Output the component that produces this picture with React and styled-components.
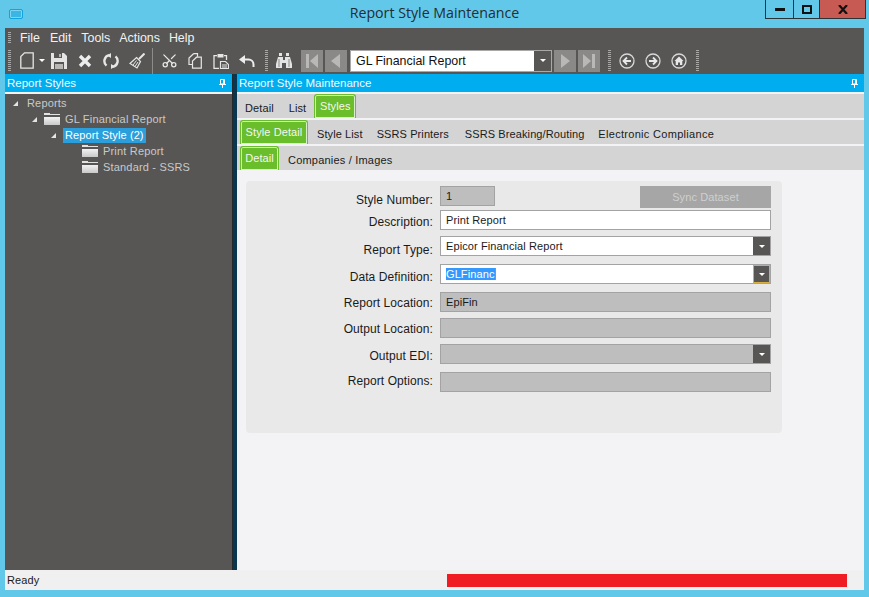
import React from 'react';
import styled, { createGlobalStyle } from 'styled-components';
import { Scissors } from 'lucide-react';

const GlobalStyle = createGlobalStyle`
html, body { margin: 0; padding: 0; height: 100%; overflow: hidden; }
body { background: #62c8ea; font-family: "Liberation Sans", Arial, sans-serif; font-size: 12px; }
`;

const Win = styled.div`
height: 597px;
width: 869px;
display: flex;
flex-direction: column;
background: #62c8ea;
`;

const TitleBar = styled.div`
height: 28px;
display: grid;
grid-template-columns: 1fr auto 1fr;
flex: none;
`;

const AppIcon = styled.div`
width: 12px;
height: 8px;
margin: 9px 0 0 9px;
border: 1px solid #12a4dc;
border-radius: 2px;
background: #3bb6e4;
box-shadow: inset 0 0 0 1px #7fd4f0;
`;

const Title = styled.div`
font-family: "Open Sans", sans-serif;
font-size: 14.2px;
line-height: 26px;
color: #1f2d33;
`;

const WinControls = styled.div`
justify-self: end;
display: flex;
height: 18px;
margin-right: 3px;
border: 1px solid #2a3338;
border-top: 0;
`;

const WinButton = styled.div`
width: ${props => props.$w}px;
display: flex;
align-items: center;
justify-content: center;
background: ${props => props.$close ? '#c75a52' : 'transparent'};
border-left: ${props => props.$first ? '0' : '1px solid #2a3338'};
`;

const Frame = styled.div`
flex: 1;
margin: 0 5px 7px;
display: flex;
flex-direction: column;
min-height: 0;
`;

const MenuBar = styled.div`
height: 19px;
background: #575654;
display: flex;
align-items: center;
padding-left: 3px;
flex: none;
`;

const Grip = styled.div`
width: 3px;
height: ${props => props.$h || 22}px;
margin-left: ${props => props.$ml || 0}px;
flex: none;
background: repeating-linear-gradient(to bottom, #a9a8a6 0 1px, transparent 1px 2px);
`;

const MenuItem = styled.span`
color: #f2f2f2;
font-size: 12.4px;
margin-left: ${props => props.$ml}px;
`;

const ToolBar = styled.div`
height: 27px;
background: #575654;
display: flex;
align-items: center;
padding-left: 3px;
flex: none;
`;

const ToolIcon = styled.div`
width: ${props => props.$w || 26}px;
margin-left: ${props => props.$ml || 0}px;
height: 24px;
flex: none;
display: flex;
align-items: center;
justify-content: center;
color: #e6e6e6;
`;

const ToolSep = styled.div`
width: 1px;
height: 26px;
margin-left: 2px;
background: #8d8c8a;
flex: none;
`;

const NavButton = styled.div`
width: 22px;
height: 22px;
margin-left: ${props => props.$ml || 0}px;
background: #8a8988;
flex: none;
display: flex;
align-items: center;
justify-content: center;
`;

const Combo = styled.div`
width: 202px;
height: 22px;
margin-left: 3px;
box-sizing: border-box;
border: 1px solid #a8a8a8;
background: #fff;
display: flex;
align-items: center;
justify-content: space-between;
font-size: 12.4px;
color: #111;
padding-left: 5px;
flex: none;
`;

const ComboArrow = styled.div`
width: ${props => props.$w || 17}px;
align-self: stretch;
background: #575654;
display: flex;
align-items: center;
justify-content: center;
box-sizing: border-box;
border: ${props => props.$focus ? '1px solid #d8ae3c' : '0'};
`;

const Caret = styled.div`
width: 0;
height: 0;
border-left: 3px solid transparent;
border-right: 3px solid transparent;
border-top: 3px solid #fff;
`;

const Panes = styled.div`
flex: 1;
display: flex;
min-height: 0;
`;

const LeftPane = styled.div`
width: 227px;
flex: none;
display: flex;
flex-direction: column;
`;

const Splitter = styled.div`
width: 5px;
flex: none;
background: #0a3650;
border-left: 1px solid #24292c;
box-sizing: border-box;
`;

const RightPane = styled.div`
flex: 1;
display: flex;
flex-direction: column;
min-width: 0;
`;

const PaneHeader = styled.div`
height: 18px;
flex: none;
background: #00adef;
color: #f4fbff;
font-size: 11.5px;
display: flex;
align-items: center;
justify-content: space-between;
padding: 0 6px 0 2px;
border-bottom: 2px solid #f3f3f5;
`;

const Tree = styled.div`
flex: 1;
background: #575654;
padding-top: 1px;
`;

const TreeRow = styled.div`
height: 16px;
display: flex;
align-items: center;
padding-left: ${props => props.$indent}px;
color: #c9c9c9;
font-size: 11px;
letter-spacing: 0.18px;
`;

const Twist = styled.div`
width: 0;
height: 0;
flex: none;
border-bottom: 5px solid #e4e4e4;
border-left: 5px solid transparent;
margin-right: ${props => props.$mr}px;
`;

const Folder = styled.div`
width: 16px;
height: 12px;
flex: none;
margin-right: 5px;
background:
  linear-gradient(to bottom, #f2f2f2, #c9c9c9) 0 4px / 100% 8px no-repeat,
  linear-gradient(to bottom, #e2e2e2, #e2e2e2) 0 1px / 100% 1px no-repeat,
  linear-gradient(to bottom, #e2e2e2, #e2e2e2) 0 0 / 6px 1px no-repeat;
`;

const Selected = styled.span`
background: #2a9fdb;
color: #fff;
padding: 1px 2px;
margin-left: -2px;
line-height: 13px;
letter-spacing: 0.1px;
`;

const TabRow = styled.div`
height: 24px;
flex: none;
background: #d4d4d4;
display: flex;
align-items: flex-end;
border-bottom: 2px solid #f3f3f5;
padding-left: ${props => props.$pl || 0}px;
box-sizing: content-box;
`;

const Tab = styled.div`
font-size: 11px;
color: #1a1a1a;
margin-left: ${props => props.$ml || 0}px;
height: 100%;
display: flex;
align-items: center;
padding-top: 3px;
box-sizing: border-box;
letter-spacing: ${props => props.$ls || 0.1}px;
white-space: nowrap;
`;

const ActiveTab = styled.div`
font-size: 11px;
color: #f4f9ee;
background: #6abd2b;
width: ${props => props.$w}px;
margin-left: ${props => props.$ml || 0}px;
height: 100%;
box-sizing: border-box;
display: flex;
align-items: center;
justify-content: center;
padding-bottom: 1px;
border: 1px solid #6abd2b;
border-bottom: 0;
border-radius: 3px 3px 0 0;
box-shadow: inset 0 0 0 1px #d9eecb;
letter-spacing: 0.1px;
white-space: nowrap;
`;

const Content = styled.div`
flex: 1;
background: #f3f3f5;
padding: 9px 0 0 9px;
min-height: 0;
`;

const Card = styled.div`
width: 536px;
height: 252px;
box-sizing: border-box;
background: #e9e9e9;
border-radius: 4px;
padding-top: 5px;
`;

const FormRow = styled.div`
display: flex;
margin-top: ${props => props.$mt || 0}px;
height: ${props => props.$h || 20}px;
`;

const Label = styled.div`
width: 187px;
flex: none;
text-align: right;
font-size: 12px;
letter-spacing: 0.08px;
color: #1a1a1a;
padding-top: ${props => props.$pt || 0}px;
line-height: 14px;
white-space: nowrap;
`;

const Field = styled.div`
margin-left: 7px;
width: ${props => props.$w || 331}px;
height: 20px;
flex: none;
box-sizing: border-box;
border: 1px solid #a3a3a3;
background: ${props => props.$off ? '#bebebe' : '#fff'};
display: flex;
align-items: center;
justify-content: space-between;
font-size: 11px;
letter-spacing: 0.1px;
color: #1a1a1a;
padding-left: 5px;
`;

const Highlight = styled.span`
background: #3399ff;
color: #fff;
border-right: 1px solid #d9822b;
`;

const SyncButton = styled.div`
margin-left: 145px;
width: 131px;
height: 22px;
flex: none;
background: #a6a6a6;
color: #cfcfcf;
font-size: 11px;
letter-spacing: 0.1px;
display: flex;
align-items: center;
justify-content: center;
`;

const StatusBar = styled.div`
height: 20px;
flex: none;
background: #f0f0f0;
display: flex;
align-items: center;
font-size: 11px;
letter-spacing: 0.1px;
color: #1a1a1a;
padding-left: 2px;
`;

const Progress = styled.div`
width: 400px;
height: 13px;
margin-left: auto;
margin-right: 17px;
background: #f01c24;
`;

const Icon = ({ w = 16, h = 16, children }) => (
  <svg width={w} height={h} viewBox={`0 0 ${w} ${h}`} fill="none">{children}</svg>
);

const Pin = ({ color = '#fff' }) => (
  <svg width="7" height="9" viewBox="0 0 7 9" fill="none">
    <path d="M1.5.5h4v4.5h-4zM0 5.5h7M3.5 5.5V9M4.5 1v4" stroke={color} />
  </svg>
);

const NavGlyph = ({ dir, bar }) => (
  <svg width="14" height="16" viewBox="0 0 14 16">
    <g transform={dir === 'left' ? 'translate(14 0) scale(-1 1)' : undefined} fill="#b9b8b7">
      <path d={bar ? 'M1 1 9 8 1 15Z' : 'M3 1 12 8 3 15Z'} />
      {bar && <rect x="10" y="1" width="3" height="14" />}
    </g>
  </svg>
);

const CircleIcon = ({ children }) => (
  <svg width="16" height="16" viewBox="0 0 16 16" fill="none">
    <circle cx="8" cy="8" r="7" stroke="#d8d8d8" strokeWidth="1.3" />
    {children}
  </svg>
);

const Toolbar = () => (
  <ToolBar>
    <Grip />
    <ToolIcon $w={22} $ml={5}>
      <Icon w={14} h={17}><path d="M4.5.8h8.7v15.4H.8V4.5Z" stroke="#e6e6e6" strokeWidth="1.3" /></Icon>
    </ToolIcon>
    <ToolIcon $w={8}><Caret /></ToolIcon>
    <ToolIcon>
      <Icon>
        <path d="M0 0h13l3 3v13H0Z" fill="#e4e4e4" />
        <path d="M3 0h8v5H3ZM3 9h10v7H3Z" fill="#575654" />
        <path d="M8 1h2v3H8ZM4 11h8v5H4Z" fill="#b9b8b7" />
      </Icon>
    </ToolIcon>
    <ToolIcon>
      <Icon w={14} h={14}><path d="M2 2l10 10M12 2 2 12" stroke="#ededed" strokeWidth="3.4" /></Icon>
    </ToolIcon>
    <ToolIcon>
      <Icon>
        <path d="M6 2.2A6 6 0 0 0 3.5 12.6M10 13.8A6 6 0 0 0 12.5 3.4" stroke="#e6e6e6" strokeWidth="2.4" />
        <path d="M8 0v5L4 2.5ZM8 16v-5l4 2.5Z" fill="#e6e6e6" />
      </Icon>
    </ToolIcon>
    <ToolIcon>
      <Icon>
        <path d="M15.5.5 10 6" stroke="#e6e6e6" strokeWidth="2" />
        <path d="M7.5 4.5 11.5 8.5 8 15 1 10.5Z" stroke="#e6e6e6" strokeWidth="1.2" />
        <path d="M4 12 7.5 7.5M6 13.5 9 9" stroke="#e6e6e6" />
      </Icon>
    </ToolIcon>
    <ToolSep />
    <ToolIcon $ml={3}><Scissors size={17} strokeWidth={1.8} style={{ transform: 'rotate(-90deg)' }} /></ToolIcon>
    <ToolIcon>
      <Icon w={14} h={16}>
        <path d="M5.5.7h4v3M5.5.7 1 5v6.5h3" stroke="#e6e6e6" strokeWidth="1.2" />
        <path d="M8.5 4.2h4.8v11H4.5V8Z" stroke="#e6e6e6" strokeWidth="1.2" />
      </Icon>
    </ToolIcon>
    <ToolIcon>
      <Icon>
        <path d="M4 2.7H1v12.6h5M11 2.7h2.5V7" stroke="#e6e6e6" strokeWidth="1.3" />
        <path d="M4.5 1h6v3.5h-6Z" fill="#e6e6e6" />
        <path d="M7.5 8.5h5l3 3v4h-8Z" stroke="#e6e6e6" strokeWidth="1.2" />
        <path d="M9 12h5M9 14h5" stroke="#e6e6e6" />
      </Icon>
    </ToolIcon>
    <ToolIcon>
      <Icon h={12}>
        <path d="M4 4.5h5.5a5 5 0 0 1 5 5V12" stroke="#ededed" strokeWidth="2" />
        <path d="M6 0v9L0 4.5Z" fill="#ededed" />
      </Icon>
    </ToolIcon>
    <Grip $ml={5} />
    <ToolIcon $ml={3}>
      <Icon h={15}>
        <path d="M3 0h3v3H3ZM10 0h3v3h-3Z" fill="#e4e4e4" />
        <path d="M2 4h5v3h2V4h5l2 7v4H10v-5H6v5H0v-4Z" fill="#e4e4e4" />
        <path d="M3 6v8M13 6v8" stroke="#8a8988" />
      </Icon>
    </ToolIcon>
    <NavButton $ml={4}><NavGlyph dir="left" bar /></NavButton>
    <NavButton $ml={2}><NavGlyph dir="left" /></NavButton>
    <Combo>
      GL Financial Report
      <ComboArrow><Caret /></ComboArrow>
    </Combo>
    <NavButton $ml={2}><NavGlyph dir="right" /></NavButton>
    <NavButton $ml={2}><NavGlyph dir="right" bar /></NavButton>
    <Grip $ml={8} />
    <ToolIcon $ml={3}>
      <CircleIcon><path d="M12 8H5M8 4.5 4.5 8 8 11.5" stroke="#e8e8e8" strokeWidth="1.8" /></CircleIcon>
    </ToolIcon>
    <ToolIcon>
      <CircleIcon><path d="M4 8h7M8 4.5 11.5 8 8 11.5" stroke="#e8e8e8" strokeWidth="1.8" /></CircleIcon>
    </ToolIcon>
    <ToolIcon>
      <CircleIcon><path d="M8 3.5 12.5 8H11.3v4H9V9.5H7V12H4.7V8H3.5Z" fill="#e8e8e8" /></CircleIcon>
    </ToolIcon>
    <Grip $ml={4} />
  </ToolBar>
);

const ReportTree = () => (
  <Tree>
    <TreeRow $indent={8}><Twist $mr={9} />Reports</TreeRow>
    <TreeRow $indent={27}><Twist $mr={7} /><Folder />GL Financial Report</TreeRow>
    <TreeRow $indent={46}><Twist $mr={9} /><Selected>Report Style (2)</Selected></TreeRow>
    <TreeRow $indent={77}><Folder />Print Report</TreeRow>
    <TreeRow $indent={77}><Folder />Standard - SSRS</TreeRow>
  </Tree>
);

const StyleForm = () => (
  <Card>
    <FormRow $h={24}>
      <Label $pt={7}>Style Number:</Label>
      <Field $w={55} $off>1</Field>
      <SyncButton>Sync Dataset</SyncButton>
    </FormRow>
    <FormRow>
      <Label $pt={5}>Description:</Label>
      <Field>Print Report</Field>
    </FormRow>
    <FormRow $mt={6}>
      <Label $pt={7}>Report Type:</Label>
      <Field>Epicor Financial Report<ComboArrow><Caret /></ComboArrow></Field>
    </FormRow>
    <FormRow $mt={8}>
      <Label $pt={6}>Data Definition:</Label>
      <Field><Highlight>GLFinanc</Highlight><ComboArrow $focus><Caret /></ComboArrow></Field>
    </FormRow>
    <FormRow $mt={8}>
      <Label $pt={4}>Report Location:</Label>
      <Field $off>EpiFin</Field>
    </FormRow>
    <FormRow $mt={6}>
      <Label $pt={4}>Output Location:</Label>
      <Field $off />
    </FormRow>
    <FormRow $mt={6}>
      <Label $pt={5}>Output EDI:</Label>
      <Field $off><span /><ComboArrow><Caret /></ComboArrow></Field>
    </FormRow>
    <FormRow $mt={8}>
      <Label $pt={2}>Report Options:</Label>
      <Field $off />
    </FormRow>
  </Card>
);

export default function App() {
  return (
    <Win>
      <GlobalStyle />
      <TitleBar>
        <AppIcon />
        <Title>Report Style Maintenance</Title>
        <WinControls>
          <WinButton $w={27} $first>
            <svg width="10" height="3"><rect width="10" height="3" fill="#111" /></svg>
          </WinButton>
          <WinButton $w={25}>
            <svg width="10" height="9" fill="none"><rect x="1" y="1" width="8" height="7" stroke="#111" strokeWidth="2" /></svg>
          </WinButton>
          <WinButton $w={45} $close>
            <svg width="10" height="9"><path d="M1 0l8 9M9 0 1 9" stroke="#111" strokeWidth="2.2" /></svg>
          </WinButton>
        </WinControls>
      </TitleBar>
      <Frame>
        <MenuBar>
          <Grip $h={12} />
          <MenuItem $ml={9}>File</MenuItem>
          <MenuItem $ml={10}>Edit</MenuItem>
          <MenuItem $ml={10}>Tools</MenuItem>
          <MenuItem $ml={9}>Actions</MenuItem>
          <MenuItem $ml={9}>Help</MenuItem>
        </MenuBar>
        <Toolbar />
        <Panes>
          <LeftPane>
            <PaneHeader>Report Styles<Pin /></PaneHeader>
            <ReportTree />
          </LeftPane>
          <Splitter />
          <RightPane>
            <PaneHeader>Report Style Maintenance<Pin /></PaneHeader>
            <TabRow $pl={8}>
              <Tab>Detail</Tab>
              <Tab $ml={15}>List</Tab>
              <ActiveTab $w={42} $ml={8}>Styles</ActiveTab>
            </TabRow>
            <TabRow $pl={3}>
              <ActiveTab $w={68}>Style Detail</ActiveTab>
              <Tab $ml={9}>Style List</Tab>
              <Tab $ml={14}>SSRS Printers</Tab>
              <Tab $ml={16}>SSRS Breaking/Routing</Tab>
              <Tab $ml={14} $ls={0.3}>Electronic Compliance</Tab>
            </TabRow>
            <TabRow $pl={3}>
              <ActiveTab $w={39}>Detail</ActiveTab>
              <Tab $ml={9} $ls={0.2}>Companies / Images</Tab>
            </TabRow>
            <Content>
              <StyleForm />
            </Content>
          </RightPane>
        </Panes>
        <StatusBar>
          Ready
          <Progress />
        </StatusBar>
      </Frame>
    </Win>
  );
}
